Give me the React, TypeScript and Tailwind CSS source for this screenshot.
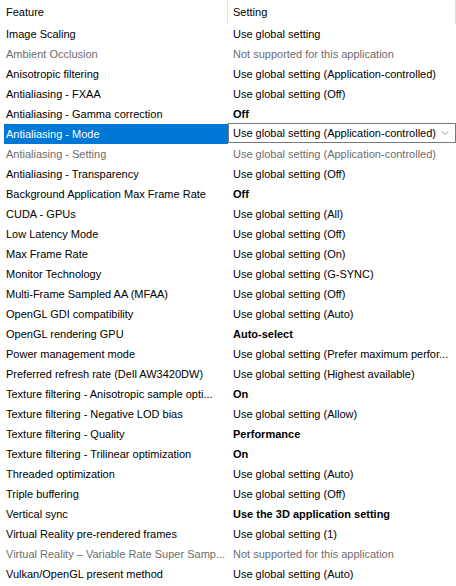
import { ChevronDown } from 'lucide-react';

type Row = {
  feature: string;
  setting: string;
  disabled?: boolean;
  bold?: boolean;
  selected?: boolean;
};

const rows: Row[] = [
  { feature: 'Image Scaling', setting: 'Use global setting' },
  { feature: 'Ambient Occlusion', setting: 'Not supported for this application', disabled: true },
  { feature: 'Anisotropic filtering', setting: 'Use global setting (Application-controlled)' },
  { feature: 'Antialiasing - FXAA', setting: 'Use global setting (Off)' },
  { feature: 'Antialiasing - Gamma correction', setting: 'Off', bold: true },
  { feature: 'Antialiasing - Mode', setting: 'Use global setting (Application-controlled)', selected: true },
  { feature: 'Antialiasing - Setting', setting: 'Use global setting (Application-controlled)', disabled: true },
  { feature: 'Antialiasing - Transparency', setting: 'Use global setting (Off)' },
  { feature: 'Background Application Max Frame Rate', setting: 'Off', bold: true },
  { feature: 'CUDA - GPUs', setting: 'Use global setting (All)' },
  { feature: 'Low Latency Mode', setting: 'Use global setting (Off)' },
  { feature: 'Max Frame Rate', setting: 'Use global setting (On)' },
  { feature: 'Monitor Technology', setting: 'Use global setting (G-SYNC)' },
  { feature: 'Multi-Frame Sampled AA (MFAA)', setting: 'Use global setting (Off)' },
  { feature: 'OpenGL GDI compatibility', setting: 'Use global setting (Auto)' },
  { feature: 'OpenGL rendering GPU', setting: 'Auto-select', bold: true },
  { feature: 'Power management mode', setting: 'Use global setting (Prefer maximum perfor...' },
  { feature: 'Preferred refresh rate (Dell AW3420DW)', setting: 'Use global setting (Highest available)' },
  { feature: 'Texture filtering - Anisotropic sample opti...', setting: 'On', bold: true },
  { feature: 'Texture filtering - Negative LOD bias', setting: 'Use global setting (Allow)' },
  { feature: 'Texture filtering - Quality', setting: 'Performance', bold: true },
  { feature: 'Texture filtering - Trilinear optimization', setting: 'On', bold: true },
  { feature: 'Threaded optimization', setting: 'Use global setting (Auto)' },
  { feature: 'Triple buffering', setting: 'Use global setting (Off)' },
  { feature: 'Vertical sync', setting: 'Use the 3D application setting', bold: true },
  { feature: 'Virtual Reality pre-rendered frames', setting: 'Use global setting (1)' },
  { feature: 'Virtual Reality – Variable Rate Super Samp...', setting: 'Not supported for this application', disabled: true },
  { feature: 'Vulkan/OpenGL present method', setting: 'Use global setting (Auto)' },
];

export default function App() {
  return (
    <div
      className="w-[456px] h-[586px] bg-white text-[11px] text-black overflow-hidden"
      style={{ fontFamily: '"Liberation Sans", Arial, sans-serif' }}
    >
      {/* header */}
      <div className="grid grid-cols-[228px_228px] h-[24px]">
        <div className="flex items-center pl-[6px] border-r border-[#e5e5e5]">Feature</div>
        <div className="flex items-center pl-[5px] border-r border-[#dcdcdc]">Setting</div>
      </div>

      {/* rows */}
      {rows.map((row) => (
        <div key={row.feature} className="grid grid-cols-[228px_228px] h-[20px]">
          {row.selected ? (
            <div className="flex items-center ml-[4px] pl-[2px] bg-[#0078d7] text-white whitespace-nowrap overflow-hidden">
              {row.feature}
            </div>
          ) : (
            <div
              className={`flex items-center pl-[6px] whitespace-nowrap overflow-hidden ${
                row.disabled ? 'text-[#6d6d6d]' : ''
              }`}
            >
              {row.feature}
            </div>
          )}
          {row.selected ? (
            <div className="flex items-center justify-between -mt-[1px] h-[20px] pl-[4px] pr-[4px] border border-[#7a7a7a] bg-white">
              <span className="whitespace-nowrap">{row.setting}</span>
              <ChevronDown className="w-[12px] h-[12px] text-[#555]" strokeWidth={1.2} />
            </div>
          ) : (
            <div
              className={`flex items-center pl-[5px] whitespace-nowrap overflow-hidden ${
                row.disabled ? 'text-[#6d6d6d]' : ''
              } ${row.bold ? 'font-bold' : ''}`}
            >
              {row.setting}
            </div>
          )}
        </div>
      ))}
    </div>
  );
}
